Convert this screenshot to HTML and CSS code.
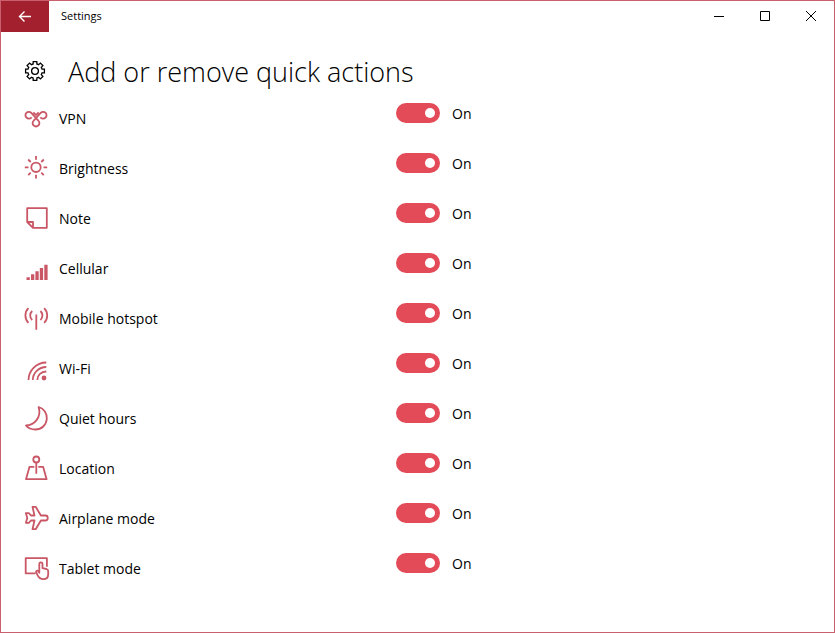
FILE: index.html
```html
<!DOCTYPE html>
<html lang="en">
<head>
    <meta charset="UTF-8">
    <meta name="viewport" content="width=device-width, initial-scale=1.0">
    <title>Settings</title>
    <link rel="stylesheet" href="styles.css">
</head>
<body>

<div class="window">
    <header class="titlebar">
        <button class="back" aria-label="Back">
            <svg width="14" height="12" viewBox="0 0 14 12"><path d="M13 5.500H1.500M6.500.5l-5 5 5 5"/></svg>
        </button>
        <span class="app-name">Settings</span>
        <div class="controls">
            <button aria-label="Minimize"><svg width="12" height="12" viewBox="0 0 12 12"><path d="M1 5.5h10"/></svg></button>
            <button aria-label="Maximize"><svg width="12" height="12" viewBox="0 0 12 12"><path d="M1.5.5h9v9h-9z"/></svg></button>
            <button aria-label="Close"><svg width="12" height="12" viewBox="0 0 12 12"><path d="M1 0l10 10M11 0L1 10"/></svg></button>
        </div>
    </header>

    <main>
        <div class="page-title">
            <svg class="gear" viewBox="-11 -11 24 24">
                <path d="M7 1.9A7.3 7.3 0 0 1 6.3 3.6L7.9 5.4 5.4 7.9 3.6 6.3A7.3 7.3 0 0 1 1.9 7L1.8 9.4H-1.8L-1.9 7A7.3 7.3 0 0 1-3.6 6.3L-5.4 7.9-7.9 5.4-6.3 3.6A7.3 7.3 0 0 1-7 1.9L-9.4 1.8V-1.8L-7-1.9A7.3 7.3 0 0 1-6.3-3.6L-7.9-5.4-5.4-7.9-3.6-6.3A7.3 7.3 0 0 1-1.9-7L-1.8-9.4H1.8L1.9-7A7.3 7.3 0 0 1 3.6-6.3L5.4-7.9 7.9-5.4 6.3-3.6A7.3 7.3 0 0 1 7-1.9L9.4-1.8V1.8Z"/>
                <circle r="3.4"/>
            </svg>
            <h1>Add or remove quick actions</h1>
        </div>

        <ul class="actions">
            <li>
                <svg class="icon" viewBox="0 0 24 24"><path d="M7.600 11.200A3.400 3.400 0 1 1 7.300 6.800L14.300 14.600A3.400 3.400 0 1 1 9.700 14.600L16.700 6.800A3.400 3.400 0 1 1 16.400 11.200M9.400 6.300L12 9l2.600-2.700"/></svg>
                <label for="vpn">VPN</label>
                <span class="toggle"><input type="checkbox" id="vpn" checked><span>On</span></span>
            </li>
            <li>
                <svg class="icon" viewBox="0 0 24 24"><circle cx="12" cy="11.3" r="4.7"/><path d="M12 0v3.800M12 18.800v3.800M.8 11.300h3.700M19.500 11.300h3.700M4.200 3.500l2.500 2.500M17.300 16.600l2.500 2.500M4.200 19.100l2.500-2.500M17.300 6l2.500-2.500"/></svg>
                <label for="brightness">Brightness</label>
                <span class="toggle"><input type="checkbox" id="brightness" checked><span>On</span></span>
            </li>
            <li>
                <svg class="icon" viewBox="0 0 24 24"><path d="M3.2 2.2h19.6v19.6H9L3.2 16zM3.2 16H9v5.8"/></svg>
                <label for="note">Note</label>
                <span class="toggle"><input type="checkbox" id="note" checked><span>On</span></span>
            </li>
            <li>
                <svg class="icon solid" viewBox="0 0 24 24"><path d="M2.5 21.3h3.3V24H2.500zM7 18.300h3.300V24H7zM11.400 15.300h3.300V24h-3.300zM15.800 12h3.300v12h-3.300zM20.300 8.700h3.300V24h-3.300z"/></svg>
                <label for="cellular">Cellular</label>
                <span class="toggle"><input type="checkbox" id="cellular" checked><span>On</span></span>
            </li>
            <li>
                <svg class="icon" viewBox="0 0 24 24"><path d="M12.300 8.500v15.300M4.400 2.200c-4 4-4 10.600 0 14.600M8.200 5c-2.700 2.600-2.700 6.400 0 9M20.200 2.200c4 4 4 10.600 0 14.600M16.400 5c2.700 2.600 2.700 6.400 0 9"/></svg>
                <label for="hotspot">Mobile hotspot</label>
                <span class="toggle"><input type="checkbox" id="hotspot" checked><span>On</span></span>
            </li>
            <li>
                <svg class="icon" viewBox="0 0 24 24"><path d="M4.500 24C4.500 15 12 6.500 22.300 6.500M8.800 24c0-7 6-13 13.500-13M13.300 24c0-5 4-8.500 9-8.500"/><circle class="dot" cx="20" cy="22" r="2.4"/></svg>
                <label for="wifi">Wi-Fi</label>
                <span class="toggle"><input type="checkbox" id="wifi" checked><span>On</span></span>
            </li>
            <li>
                <svg class="icon" viewBox="0 0 24 24"><path d="M14.600 1C20 2.600 23.200 7.500 22.800 13 22.300 19 17.500 23.500 11.500 23.500 7.500 23.500 4 22 2 19.500 9.500 19.500 18 12 14.600 1z"/></svg>
                <label for="quiet">Quiet hours</label>
                <span class="toggle"><input type="checkbox" id="quiet" checked><span>On</span></span>
            </li>
            <li>
                <svg class="icon" viewBox="0 0 24 24"><circle cx="12.3" cy="3.5" r="3"/><path d="M12.300 6.500v11.300M10.300 10.800H5.500L2 23.200h20.600L19.100 10.800h-4.800"/></svg>
                <label for="location">Location</label>
                <span class="toggle"><input type="checkbox" id="location" checked><span>On</span></span>
            </li>
            <li>
                <svg class="icon" viewBox="0 0 24 24"><path d="M8.500.8h3.200l5.200 8.700h4.600c3 0 3 5 0 5h-4.600l-5.200 8.700H8.500l2-8.700H7l-2.200 2.300H1.900L3.300 12 1.900 7.200h2.900L7 9.500h3.500z"/></svg>
                <label for="airplane">Airplane mode</label>
                <span class="toggle"><input type="checkbox" id="airplane" checked><span>On</span></span>
            </li>
            <li>
                <svg class="icon" viewBox="0 0 24 24"><path d="M11.500 17.300H1.700V2.200h21.200v8.500M15.300 16.800V8c0-2.200 3.200-2.200 3.200 0v4.200l4 .8c1.200.3 1.700 1 1.700 2.200v3c0 3-2 5-4.900 5-3.200 0-4.600-1.500-5.800-4l-1.300-3c-.5-1.400 1.200-2.100 2-1.100z"/></svg>
                <label for="tablet">Tablet mode</label>
                <span class="toggle"><input type="checkbox" id="tablet" checked><span>On</span></span>
            </li>
        </ul>
    </main>
</div>

<script>
    document.querySelectorAll('.toggle input').forEach(function (input) {
        input.addEventListener('change', function () {
            input.nextElementSibling.textContent = input.checked ? 'On' : 'Off';
        });
    });
</script>

</body>
</html>
```
FILE: styles.css
```css
* {
    box-sizing: border-box;
}
body {
    margin: 0;
    background-color: #fff;
    color: #000;
    font-family: "Open Sans", "Noto Sans", sans-serif;
    font-size: 14px;
}
.window {
    min-height: 100vh;
    border: 1px solid #c9606d;
}
svg {
    fill: none;
    stroke: currentColor;
}
button {
    display: flex;
    align-items: center;
    justify-content: center;
    padding: 0;
    border: none;
    background: none;
    color: #000;
}
.titlebar {
    display: flex;
    align-items: stretch;
    height: 31px;
}
.back {
    width: 48px;
    background-color: #a3202f;
    color: #fff;
}
.back svg {
    stroke-width: 1.4;
}
.app-name {
    padding-left: 12px;
    font-size: 11px;
    line-height: 30px;
}
.controls {
    display: flex;
    margin-left: auto;
}
.controls button {
    width: 46px;
}
main {
    padding: 20px 23px;
}
.page-title {
    display: flex;
    align-items: center;
    gap: 20px;
}
.gear {
    width: 24px;
    height: 24px;
    stroke-width: 1.3;
}
h1 {
    margin: 0;
    font-size: 27px;
    font-weight: 300;
    line-height: 40px;
}
.actions {
    max-width: 448px;
    margin: 1px 0 0;
    padding: 0;
    list-style: none;
}
.actions li {
    display: flex;
    align-items: center;
    height: 50px;
}
.icon {
    width: 24px;
    height: 24px;
    overflow: visible;
    color: #c95766;
    stroke-width: 1.8;
    stroke-linejoin: round;
}
.icon.solid,
.icon .dot {
    fill: currentColor;
    stroke: none;
}
.actions label {
    flex: 1;
    padding-left: 11px;
}
.toggle {
    display: flex;
    align-items: center;
    gap: 12px;
    padding-bottom: 10px;
}
.toggle input {
    appearance: none;
    display: flex;
    align-items: center;
    justify-content: flex-end;
    width: 44px;
    height: 20px;
    margin: 0;
    padding: 0 5px;
    border-radius: 10px;
    background-color: #e34b58;
}
.toggle input::before {
    content: "";
    width: 10px;
    height: 10px;
    border-radius: 50%;
    background-color: #fff;
}
.toggle input:not(:checked) {
    justify-content: flex-start;
    background-color: #999;
}
.toggle span {
    width: 20px;
}
```
